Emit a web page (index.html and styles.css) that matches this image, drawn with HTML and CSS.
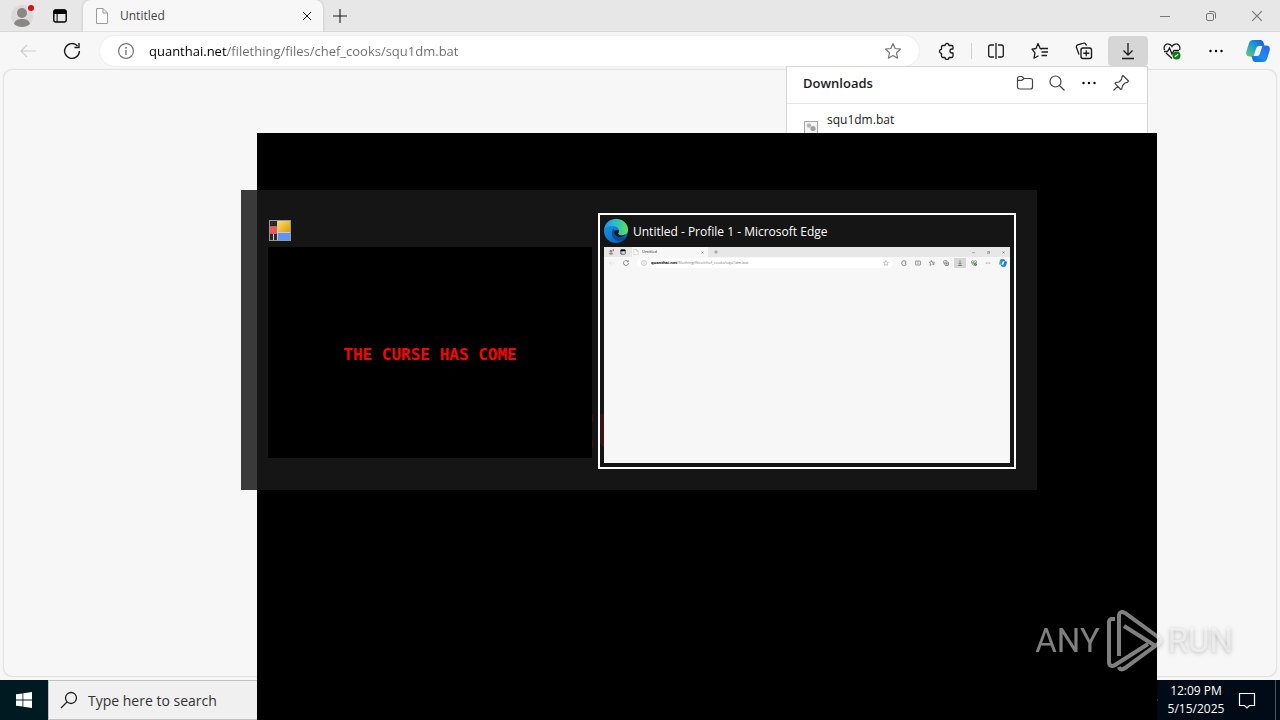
FILE: index.html
```html
<!DOCTYPE html>
<html lang="en">
<head>
    <meta charset="utf-8">
    <title>Untitled</title>
    <link rel="stylesheet" href="styles.css">
</head>
<body>
    <!-- icons, shared by the browser and its thumbnail -->
    <svg class="sprite" aria-hidden="true">
        <symbol id="i-user" viewBox="0 0 24 24">
            <circle cx="12" cy="12" r="11" fill="#dcdad8"/>
            <circle cx="12" cy="9" r="5" fill="#8a8886"/>
            <path d="M4 20c1-4 4-5 8-5s7 1 8 5c-4 4-12 4-16 0z" fill="#8a8886"/>
            <circle cx="21" cy="4" r="3" fill="#e00b1c"/>
        </symbol>
        <symbol id="i-tabs" viewBox="0 0 16 16">
            <rect x="1.8" y="2" width="12.4" height="12" rx="2" fill="none" stroke="#000" stroke-width="1.4"/>
            <path d="M1.5 6V3.5a2 2 0 0 1 2-2h9a2 2 0 0 1 2 2V6zM4.6 5h1v9h-1z" fill="#000"/>
        </symbol>
        <symbol id="i-file" viewBox="0 0 16 16">
            <path d="M2.5.5H9L13.5 5v10.5h-11zM9 .5V5h4.5" fill="#fff" stroke="#9b9b9b"/>
        </symbol>
        <symbol id="i-close" viewBox="0 0 10 10">
            <path d="M1 1l8 8M9 1L1 9" fill="none" stroke="currentColor" stroke-width="1"/>
        </symbol>
        <symbol id="i-plus" viewBox="0 0 14 14">
            <path d="M7 0v14M0 7h14" fill="none" stroke="currentColor" stroke-width="1.1"/>
        </symbol>
        <symbol id="i-min" viewBox="0 0 10 10"><path d="M0 5.5h10" stroke="currentColor"/></symbol>
        <symbol id="i-max" viewBox="0 0 10 10">
            <path d="M.5 4a1.5 1.5 0 0 1 1.5-1.5h4A1.5 1.5 0 0 1 7.5 4v4A1.5 1.5 0 0 1 6 9.5H2A1.5 1.5 0 0 1 .5 8zM3 .5h4A2.5 2.5 0 0 1 9.5 3v4.5" fill="none" stroke="currentColor"/>
        </symbol>
        <symbol id="i-back" viewBox="0 0 18 18">
            <path d="M17 9H2M8 3L2 9l6 6" fill="none" stroke="currentColor" stroke-width="1.2"/>
        </symbol>
        <symbol id="i-reload" viewBox="0 0 18 18">
            <path d="M14.5 4A7.4 7.4 0 1 0 16.4 9M16 1v4.5h-4.5" fill="none" stroke="currentColor" stroke-width="1.4"/>
        </symbol>
        <symbol id="i-info" viewBox="0 0 18 18">
            <circle cx="9" cy="9" r="7.4" fill="none" stroke="currentColor" stroke-width="1.2"/>
            <path d="M9 8v5" stroke="currentColor" stroke-width="1.4"/>
            <circle cx="9" cy="5.7" r="1" fill="currentColor"/>
        </symbol>
        <symbol id="i-star" viewBox="0 0 18 18">
            <path d="M9 1.500l2.200 5 5.300.6-4 3.700 1.100 5.400L9 13.500l-4.600 2.700 1.100-5.400-4-3.700 5.300-.6z" fill="none" stroke="currentColor" stroke-width="1.200" stroke-linejoin="round"/>
        </symbol>
        <symbol id="i-puzzle" viewBox="0 0 18 18">
            <path d="M5 3.500h2a2 2 0 0 1 4 0h2.500a1.500 1.500 0 0 1 1.500 1.500v2h-1a2 2 0 0 0 0 4h1v3a1.500 1.500 0 0 1-1.500 1.500H11a2 2 0 0 1-4 0H5A1.500 1.500 0 0 1 3.500 14v-2.700a2 2 0 0 1 0-4V5A1.500 1.500 0 0 1 5 3.500z" fill="none" stroke="currentColor" stroke-width="1.300" stroke-linejoin="round"/>
        </symbol>
        <symbol id="i-split" viewBox="0 0 18 18">
            <path d="M7 3H3.500A1.800 1.800 0 0 0 1.700 4.800v8.400A1.800 1.800 0 0 0 3.500 15H7M11 3h3.500a1.800 1.800 0 0 1 1.800 1.800v8.400a1.800 1.800 0 0 1-1.800 1.800H11M9 1v16" fill="none" stroke="currentColor" stroke-width="1.300"/>
        </symbol>
        <symbol id="i-favs" viewBox="0 0 18 18">
            <path d="M11 7L9.200 6.500 7 1.500 5 6.500l-4 .6 3 3.700-1 5.400 4.500-2.500M10.500 6.500H17M10.500 10H17M10.500 13.500H16" fill="none" stroke="currentColor" stroke-width="1.300" stroke-linejoin="round"/>
        </symbol>
        <symbol id="i-collections" viewBox="0 0 18 18">
            <path d="M4 12.500L1.500 5.500a2 2 0 0 1 1.200-2.600L8.500 1.200a2 2 0 0 1 2.500 1.200l.4 1.200" fill="none" stroke="currentColor" stroke-width="1.300"/>
            <rect x="6" y="6" width="10.500" height="10.500" rx="2" fill="none" stroke="currentColor" stroke-width="1.400"/>
            <path d="M11.250 8.300v6M8.300 11.250h6" stroke="currentColor" stroke-width="1.300"/>
        </symbol>
        <symbol id="i-download" viewBox="0 0 18 18">
            <path d="M9 1v11.500M4.500 8.500L9 13l4.500-4.500M3 16.500h12" fill="none" stroke="currentColor" stroke-width="1.300"/>
        </symbol>
        <symbol id="i-heart" viewBox="0 0 18 18">
            <path d="M1.500 8C0 4 3 1.500 5.500 2 7.500 2.300 8.500 3.500 9 4.500 9.500 3.500 10.500 2.300 12.500 2 15 1.500 18 4 16.500 8M3 11l6 5.500M1 9.500h3.500L6.500 6 9 12l2-3.500h5" fill="none" stroke="currentColor" stroke-width="1.300"/>
            <circle cx="13.500" cy="13.500" r="4" fill="#107c10"/>
            <path d="M11.800 14.800l3.400-2.600" stroke="#fff" stroke-width="1.200"/>
        </symbol>
        <symbol id="i-dots" viewBox="0 0 18 18">
            <circle cx="3.500" cy="9" r="1.200"/><circle cx="9" cy="9" r="1.200"/><circle cx="14.500" cy="9" r="1.200"/>
        </symbol>
        <symbol id="i-copilot" viewBox="0 0 24 24">
            <path d="M7 1h7.500c1.600 0 2.500 1 3 2.500L18.500 7H13c-1.500 0-2.300.8-2.700 2L7.500 17.500H3.500C.5 17.500-.4 15 .5 12L3 4C3.700 2 5 1 7 1z" fill="url(#cop1)"/>
            <path d="M17 23H9.500c-1.600 0-2.500-1-3-2.500L5.500 17H11c1.500 0 2.300-.8 2.700-2l2.800-8.500h4c3 0 3.900 2.500 3 5.500L21 20c-.7 2-2 3-4 3z" fill="url(#cop2)"/>
        </symbol>
        <symbol id="i-folder" viewBox="0 0 18 18">
            <path d="M1.500 4.500A2 2 0 0 1 3.500 2.500H6l2 2h6.500a2 2 0 0 1 2 2V13a2 2 0 0 1-2 2h-11a2 2 0 0 1-2-2zM1.500 6.300h4.300L8 4.500" fill="none" stroke="currentColor" stroke-width="1.200"/>
        </symbol>
        <symbol id="i-search" viewBox="0 0 18 18">
            <circle cx="7.500" cy="7.500" r="5.500" fill="none" stroke="currentColor" stroke-width="1.200"/>
            <path d="M11.500 11.500l5 5" stroke="currentColor" stroke-width="1.200"/>
        </symbol>
        <symbol id="i-pin" viewBox="0 0 18 18">
            <path d="M11 1.500l5.500 5.500-1 1.300-2.500.7-2.500 2.500-.7 3.500-1 .5-5.800-5.800.5-1L7 8l2.500-2.500.6-3zM5.700 12.300L1.500 16.500" fill="none" stroke="currentColor" stroke-width="1.200" stroke-linejoin="round"/>
        </symbol>
        <defs>
            <linearGradient id="cop1" x1="1" y1="0" x2="0" y2="1">
                <stop offset="0" stop-color="#1f4fd0"/><stop offset=".45" stop-color="#1998dc"/><stop offset="1" stop-color="#62d06a"/>
            </linearGradient>
            <linearGradient id="cop2" x1="1" y1="0" x2="0" y2="1">
                <stop offset="0" stop-color="#2f5fe8"/><stop offset=".55" stop-color="#1b8df0"/><stop offset="1" stop-color="#1766e0"/>
            </linearGradient>
            <linearGradient id="edge1" x1="0" y1="0" x2="1" y2="1">
                <stop offset="0" stop-color="#1aa0e8"/><stop offset=".6" stop-color="#0f6fc8"/><stop offset="1" stop-color="#0b4f9c"/>
            </linearGradient>
            <linearGradient id="edge2" x1="0" y1="0" x2="1" y2="0">
                <stop offset="0" stop-color="#1b90e0"/><stop offset=".4" stop-color="#2ab8d8"/><stop offset=".75" stop-color="#3fd08a"/><stop offset="1" stop-color="#6be050"/>
            </linearGradient>
            <linearGradient id="gold" x1="0" y1="0" x2="1" y2="1">
                <stop offset="0" stop-color="#ffe06a"/><stop offset="1" stop-color="#dc9a00"/>
            </linearGradient>
        </defs>
    </svg>

    <div class="desktop">
        <div class="browser">
            <div class="tabbar">
                <button class="icon-btn profile" aria-label="Profile"><svg class="i24"><use href="#i-user"/></svg></button>
                <button class="icon-btn actions" aria-label="Tab actions"><svg class="i16"><use href="#i-tabs"/></svg></button>
                <div class="tab">
                    <svg class="i16"><use href="#i-file"/></svg>
                    <span class="tab-title">Untitled</span>
                    <button class="icon-btn tab-close" aria-label="Close tab"><svg class="i10"><use href="#i-close"/></svg></button>
                </div>
                <button class="icon-btn new-tab" aria-label="New tab"><svg class="i14"><use href="#i-plus"/></svg></button>
                <div class="window-controls">
                    <button class="icon-btn" aria-label="Minimize"><svg class="i10"><use href="#i-min"/></svg></button>
                    <button class="icon-btn" aria-label="Restore"><svg class="i10"><use href="#i-max"/></svg></button>
                    <button class="icon-btn" aria-label="Close"><svg class="i12"><use href="#i-close"/></svg></button>
                </div>
            </div>
            <div class="toolbar">
                <button class="icon-btn back" aria-label="Back" disabled><svg class="i18"><use href="#i-back"/></svg></button>
                <button class="icon-btn" aria-label="Refresh"><svg class="i18"><use href="#i-reload"/></svg></button>
                <div class="address">
                    <svg class="i18"><use href="#i-info"/></svg>
                    <input class="url" type="text" aria-label="Address" value="quanthai.net/filething/files/chef_cooks/squ1dm.bat">
                    <svg class="i18"><use href="#i-star"/></svg>
                </div>
                <button class="icon-btn" aria-label="Extensions"><svg class="i18"><use href="#i-puzzle"/></svg></button>
                <span class="divider"></span>
                <button class="icon-btn" aria-label="Split screen"><svg class="i18"><use href="#i-split"/></svg></button>
                <button class="icon-btn" aria-label="Favorites"><svg class="i18"><use href="#i-favs"/></svg></button>
                <button class="icon-btn" aria-label="Collections"><svg class="i18"><use href="#i-collections"/></svg></button>
                <button class="icon-btn active" aria-label="Downloads"><svg class="i18"><use href="#i-download"/></svg></button>
                <button class="icon-btn" aria-label="Browser essentials"><svg class="i18"><use href="#i-heart"/></svg></button>
                <button class="icon-btn" aria-label="Settings and more"><svg class="i18"><use href="#i-dots"/></svg></button>
                <button class="icon-btn copilot" aria-label="Copilot"><svg class="i24"><use href="#i-copilot"/></svg></button>
            </div>
            <div class="page"></div>

            <div class="downloads">
                <div class="downloads-head">
                    <h2>Downloads</h2>
                    <button class="icon-btn" aria-label="Open folder"><svg class="i18"><use href="#i-folder"/></svg></button>
                    <button class="icon-btn" aria-label="Search downloads"><svg class="i18"><use href="#i-search"/></svg></button>
                    <button class="icon-btn" aria-label="More"><svg class="i18"><use href="#i-dots"/></svg></button>
                    <button class="icon-btn" aria-label="Pin"><svg class="i18"><use href="#i-pin"/></svg></button>
                </div>
                <div class="download-item">
                    <svg class="bat" viewBox="0 0 14 14">
                        <rect x=".5" y="1.5" width="13" height="12" fill="#f4f4f4" stroke="#a5a5a5"/>
                        <circle cx="5" cy="5.500" r="2.200" fill="#b5b5b5"/><circle cx="9" cy="8.500" r="2.600" fill="#a0a0a0"/>
                    </svg>
                    <span>squ1dm.bat</span>
                </div>
            </div>
        </div>

        <div class="taskbar">
            <button class="start" aria-label="Start">
                <svg class="i16" viewBox="0 0 16 16"><path d="M0 2.300L6.500 1.400v6.200H0zM7.300 1.300L16 0v7.600H7.300zM0 8.400h6.500v6.200L0 13.700zM7.300 8.400H16V16l-8.700-1.300z" fill="#fff"/></svg>
            </button>
            <label class="search">
                <svg class="i18" viewBox="0 0 18 18"><circle cx="11" cy="7" r="5.500" fill="none" stroke="#222" stroke-width="1.300"/><path d="M7 11l-6 6" stroke="#222" stroke-width="1.300"/></svg>
                <input type="text" aria-label="Search" placeholder="Type here to search">
            </label>
            <div class="tray">
                <svg class="i18" viewBox="0 0 18 18"><path d="M12 3a8 8 0 0 1 0 12" fill="none" stroke="#fff" stroke-width="1.200"/></svg>
                <div class="clock"><span>12:09 PM</span><span>5/15/2025</span></div>
                <svg class="i18" viewBox="0 0 18 18"><path d="M1.500 2.500h15v12h-5l-2.500 2.500-2.500-2.500h-5z" fill="none" stroke="#fff" stroke-width="1.200"/></svg>
                <span class="show-desktop"></span>
            </div>
        </div>

        <div class="curse-window">THE CURSE HAS COME</div>

        <div class="switcher">
            <div class="task">
                <div class="task-head">
                    <svg class="i24" viewBox="0 0 24 24">
                        <rect x="1.500" y="1.500" width="21" height="20" fill="#2a2a2a" stroke="#999"/>
                        <rect x="10" y="2" width="12" height="11" fill="url(#gold)"/>
                        <rect x="10" y="14" width="12" height="7" fill="#5f93f5"/>
                        <rect x="2" y="7" width="7" height="8" rx="1" fill="#e85a5a"/>
                        <path d="M5.500 15v6M9.500 2v19M10 13.500h12" stroke="#ccc"/>
                    </svg>
                </div>
                <div class="thumb curse">THE CURSE HAS COME</div>
            </div>
            <div class="task selected">
                <div class="task-head">
                    <svg class="i24" viewBox="0 0 24 24">
                        <circle cx="12" cy="12" r="12" fill="url(#edge1)"/>
                        <path d="M.2 10.500C1 4 6 0 12 0c7 0 12 5 12 10.500 0 4-3 6-6.500 6-3 0-4-1.200-3.500-2 .8-1 1-1.600 1-2.500C15 9 12 7 8.500 7 4 7 1 9 .2 10.500z" fill="url(#edge2)"/>
                        <path d="M9.500 9.500c-3 4-2 10 4 12.500 4 .8 7.500-1.500 9-4-4 2-10 .5-11.500-3-.8-2-.5-4-1.500-5.500z" fill="#0c4a94"/>
                        <path d="M14.800 11c.4 1.500-.3 2.500-.8 3.500 1 2.500 5 2.300 7.500.8-2 3-5 3.700-8 2.200-3-1.500-4-4-3-6z" fill="#101820"/>
                    </svg>
                    <span>Untitled - Profile 1 - Microsoft Edge</span>
                </div>
                <div class="thumb mini">
                    <div class="mini-tabbar">
                        <svg><use href="#i-user"/></svg>
                        <svg><use href="#i-tabs"/></svg>
                        <div class="mini-tab"><svg><use href="#i-file"/></svg><span>Untitled</span><svg class="i3"><use href="#i-close"/></svg></div>
                        <svg class="i4"><use href="#i-plus"/></svg>
                        <div class="mini-controls">
                            <svg class="i3"><use href="#i-min"/></svg>
                            <svg class="i3"><use href="#i-max"/></svg>
                            <svg class="i3"><use href="#i-close"/></svg>
                        </div>
                    </div>
                    <div class="mini-toolbar">
                        <svg class="mini-back"><use href="#i-back"/></svg>
                        <svg><use href="#i-reload"/></svg>
                        <div class="mini-address"><svg><use href="#i-info"/></svg><span><b>quanthai.net</b>/filething/files/chef_cooks/squ1dm.bat</span><svg><use href="#i-star"/></svg></div>
                        <svg><use href="#i-puzzle"/></svg>
                        <svg><use href="#i-split"/></svg>
                        <svg><use href="#i-favs"/></svg>
                        <svg><use href="#i-collections"/></svg>
                        <svg class="mini-active"><use href="#i-download"/></svg>
                        <svg><use href="#i-heart"/></svg>
                        <svg><use href="#i-dots"/></svg>
                        <svg class="i8"><use href="#i-copilot"/></svg>
                    </div>
                </div>
            </div>
        </div>

        <div class="watermark">
            <span>ANY</span>
            <svg viewBox="0 0 56 62">
                <path d="M9 9H6a3 3 0 0 0-3 3V52c0 4 3 5 6 3l33-21M13 46V6c0-4 3-5 6-3l33 24c3 2.500 3 5 0 7L19 58c-3 2-5 2-6-1M18 16l30 19" fill="none" stroke="currentColor" stroke-width="4"/>
            </svg>
            <span>RUN</span>
        </div>
    </div>
</body>
</html>
```
FILE: styles.css
```css
* {
    box-sizing: border-box;
}

body {
    margin: 0;
    font-family: "Open Sans", "Noto Sans", sans-serif;
    font-size: 12px;
    color: #1b1b1b;
}

button, input {
    font-family: inherit;
    border: none;
    padding: 0;
    background: none;
}

svg {
    display: block;
    flex: none;
}

.sprite {
    position: absolute;
    width: 0;
    height: 0;
}

.i3 { width: 3px; height: 3px; }
.i4 { width: 4px; height: 4px; }
.i8 { width: 8px; height: 8px; }
.i10 { width: 10px; height: 10px; }
.i12 { width: 12px; height: 12px; }
.i14 { width: 14px; height: 14px; }
.i16 { width: 16px; height: 16px; }
.i18 { width: 18px; height: 18px; }
.i24 { width: 24px; height: 24px; }

.desktop {
    position: relative;
    display: flex;
    flex-direction: column;
    height: 100vh;
    overflow: hidden;
}

/* browser */
.browser {
    position: relative;
    flex: 1;
    display: flex;
    flex-direction: column;
    background: #f7f7f7;
}

.icon-btn {
    display: flex;
    align-items: center;
    justify-content: center;
    flex: none;
    width: 40px;
    height: 30px;
    border-radius: 4px;
    color: #1b1b1b;
}

.tabbar {
    display: flex;
    align-items: center;
    height: 32px;
    background: #e7e7e7;
    border-bottom: 1px solid #d8d8d8;
}

.profile {
    margin-left: 2px;
}

.actions {
    width: 36px;
}

.tab {
    display: flex;
    align-items: center;
    width: 240px;
    height: 32px;
    margin-left: 5px;
    padding: 0 4px 0 11px;
    background: #f7f7f7;
    border-radius: 8px 8px 0 0;
    box-shadow: 0 0 3px #bbb;
    clip-path: inset(0 -4px);
}

.tab-title {
    flex: 1;
    padding-left: 10px;
    color: #444;
}

.tab-close {
    width: 24px;
}

.new-tab {
    width: 34px;
}

.window-controls {
    display: flex;
    margin-left: auto;
}

.window-controls .icon-btn {
    width: 46px;
    color: #777;
}

.toolbar {
    display: flex;
    align-items: center;
    gap: 4px;
    height: 38px;
    padding: 0 4px 0 8px;
}

.back {
    color: #ccc;
}

.address {
    flex: 1;
    display: flex;
    align-items: center;
    gap: 14px;
    height: 30px;
    margin: 0 4px;
    padding: 0 17px;
    background: #fff;
    border-radius: 15px;
    box-shadow: 0 0 2px #ddd;
    color: #767676;
}

.url {
    flex: 1;
    min-width: 0;
    height: 24px;
    font-size: 13px;
    background: linear-gradient(90deg, #000 78px, #6b6b6b 78px);
    -webkit-background-clip: text;
    background-clip: text;
    color: transparent;
}

.divider {
    width: 1px;
    height: 16px;
    background: #d0d0d0;
}

.active {
    background: #d6d6d6;
}

.copilot {
    width: 36px;
}

.page {
    flex: 1;
    margin: 0 4px 4px;
    background: #f7f7f7;
    border-radius: 8px;
    box-shadow: 0 0 2px #aaa;
}

/* downloads flyout */
.downloads {
    position: absolute;
    top: 66px;
    right: 132px;
    width: 362px;
    height: 120px;
    background: #fff;
    border: 1px solid #d5d5d5;
}

.downloads-head {
    display: flex;
    align-items: center;
    height: 37px;
    padding: 0 10px 4px 16px;
    border-bottom: 1px solid #e5e5e5;
}

.downloads-head h2 {
    flex: 1;
    margin: 0;
    font-size: 13px;
    font-weight: 600;
}

.downloads-head .icon-btn {
    width: 32px;
    color: #444;
}

.download-item {
    display: flex;
    gap: 9px;
    padding: 8px 17px;
    line-height: 16px;
}

.bat {
    width: 14px;
    height: 14px;
    margin-top: 8px;
}

/* taskbar */
.taskbar {
    display: flex;
    height: 40px;
    background: #000b18;
}

.start {
    display: flex;
    align-items: center;
    justify-content: center;
    width: 48px;
    background: #001a22;
}

.search {
    display: flex;
    align-items: center;
    gap: 10px;
    width: 344px;
    padding: 0 11px;
    background: #f0f0f0;
    border: 1px solid #c0c0c0;
}

.search input {
    flex: 1;
    font-size: 14px;
}

.search input::placeholder {
    color: #333;
}

.tray {
    display: flex;
    align-items: center;
    margin-left: auto;
    color: #fff;
}

.clock {
    display: flex;
    flex-direction: column;
    align-items: center;
    width: 72px;
    margin-right: 6px;
    line-height: 18px;
}

.show-desktop {
    width: 5px;
    height: 40px;
    margin-left: 19px;
    border-left: 1px solid #4a5260;
}

/* full black window */
.curse-window {
    position: absolute;
    top: 133px;
    left: 257px;
    width: 900px;
    height: 587px;
    background: #000;
    color: #f00;
    font: bold 46px/598px "DejaVu Sans Mono", monospace;
    text-align: center;
    white-space: nowrap;
}

/* task switcher */
.switcher {
    position: absolute;
    top: 190px;
    left: 241px;
    display: flex;
    align-items: flex-start;
    padding: 23px 21px 21px;
    background: rgba(25, 25, 25, 0.85);
}

.task {
    padding: 4px;
    border: 2px solid transparent;
}

.task.selected {
    border-color: #fff;
}

.task-head {
    display: flex;
    align-items: flex-start;
    gap: 5px;
    height: 28px;
    color: #fff;
    line-height: 26px;
}

.thumb {
    width: 406px;
    height: 216px;
    background: #f7f7f7;
}

.thumb.curse {
    width: 324px;
    height: 211px;
    background: #000;
    color: #f00;
    font: bold 16px/216px "DejaVu Sans Mono", monospace;
    text-align: center;
}

.mini {
    font-size: 4px;
    line-height: 6px;
}

.mini svg:not([class]) {
    width: 6px;
    height: 6px;
}

.mini-tabbar {
    display: flex;
    align-items: center;
    gap: 6px;
    height: 10px;
    padding: 0 5px 0 4px;
    background: #e7e7e7;
}

.mini-tab {
    display: flex;
    align-items: center;
    gap: 3px;
    width: 76px;
    height: 10px;
    padding: 0 4px 0 1px;
    background: #f7f7f7;
}

.mini-tab span {
    flex: 1;
}

.mini-controls {
    display: flex;
    gap: 12px;
    margin-left: auto;
}

.mini-toolbar {
    display: flex;
    align-items: center;
    gap: 8px;
    height: 12px;
    padding: 0 3px 0 5px;
}

.mini-address {
    flex: 1;
    display: flex;
    align-items: center;
    gap: 4px;
    height: 10px;
    padding: 0 4px;
    background: #fff;
    border-radius: 5px;
    color: #777;
}

.mini-address span {
    flex: 1;
}

.mini-address b {
    color: #000;
}

.mini-back {
    width: 6px;
    height: 6px;
    color: #ccc;
}

.mini-active {
    width: 12px;
    height: 10px;
    margin: 0 -3px;
    padding: 2px 0;
    background: #d6d6d6;
}

/* watermark */
.watermark {
    position: absolute;
    right: 47px;
    bottom: 48px;
    display: flex;
    align-items: center;
    gap: 6px;
    color: rgba(255, 255, 255, 0.5);
    font: 33px/62px Roboto, sans-serif;
    filter: drop-shadow(0 1px 2px rgba(0, 0, 0, 0.5));
}

.watermark svg {
    width: 56px;
    height: 62px;
}
```
